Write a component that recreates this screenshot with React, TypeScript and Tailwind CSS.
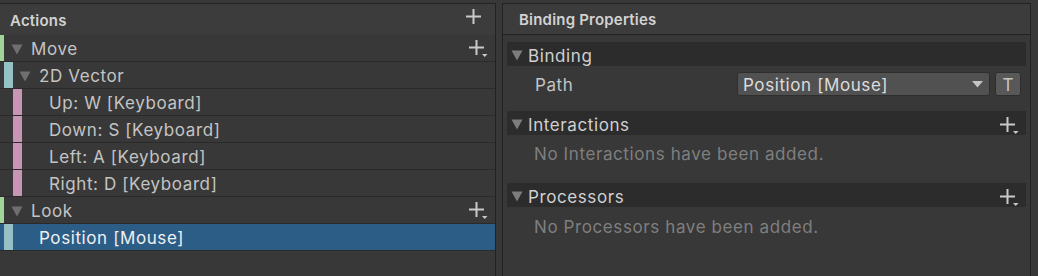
import React from "react";

function Plus({ dropdown }: { dropdown?: boolean }) {
  return (
    <svg width="19" height="18" viewBox="0 0 19 18" className="shrink-0">
      <rect x="6.5" y="0" width="2" height="15" fill="#c9c9c9" />
      <rect x="0" y="6.5" width="15" height="2" fill="#c9c9c9" />
      {dropdown && <path d="M13 14h5.5l-2.75 3z" fill="#c9c9c9" />}
    </svg>
  );
}

function Tri({ color }: { color: string }) {
  return (
    <svg width="12" height="11" viewBox="0 0 12 11" className="shrink-0">
      <path d="M0.5 0.5h11L6 10.5z" fill={color} />
    </svg>
  );
}

type RowProps = {
  bars: { color: string; w: string }[];
  text: string;
  pad: string;
  tri?: boolean;
  triPad?: string;
  plus?: boolean;
  selected?: boolean;
};

function Row({ bars, text, pad, tri, triPad, plus, selected }: RowProps) {
  return (
    <div
      className={
        "flex h-[27px] items-stretch border-b border-[#2a2a2a] " +
        (selected ? "bg-[#2c5d87]" : "")
      }
    >
      {bars.map((b, i) => (
        <div key={i} className={b.w + " shrink-0"} style={{ backgroundColor: b.color }} />
      ))}
      <div className="relative flex min-w-0 flex-1 items-center">
        {tri && (
          <div className={triPad + " flex items-center pt-[2px]"}>
            <Tri color="#6f6f6f" />
          </div>
        )}
        <span
          className={
            pad +
            " pt-[3px] text-[17px] leading-none tracking-[0.6px] " +
            (selected ? "text-[#f0f0f0]" : "text-[#c4c4c4]")
          }
        >
          {text}
        </span>
        <div className="flex-1" />
        {plus && (
          <div className="mr-[7px] mt-[2px]">
            <Plus dropdown />
          </div>
        )}
      </div>
    </div>
  );
}

function SectionHeader({ title, plus }: { title: string; plus?: boolean }) {
  return (
    <div className="flex h-[24px] items-center bg-[#2c2c2c] pl-[4px] pr-[7px]">
      <div className="flex items-center pt-[2px]">
        <Tri color="#7d7d7d" />
      </div>
      <span className="ml-[5px] pt-[4px] text-[17px] leading-none tracking-[0.6px] text-[#d0d0d0]">{title}</span>
      <div className="flex-1" />
      {plus && (
        <div className="mt-[5px]">
          <Plus dropdown />
        </div>
      )}
    </div>
  );
}

export default function App() {
  const green = "#a2d39a";
  const teal = "#95c1c4";
  const pink = "#c995b4";
  return (
    <div className="flex h-[276px] w-[1038px] overflow-hidden bg-[#383838] pt-[3px] [font-family:Inter,'Noto_Sans',sans-serif]">
      {/* Left panel */}
      <div className="flex w-[496px] shrink-0 flex-col border-r border-t border-[#222222] bg-[#383838]">
        <div className="flex h-[31px] items-center bg-[#3c3c3c] pl-[10px] pr-[10px]">
          <span className="pt-[3px] text-[15px] font-semibold tracking-[0.2px] text-[#d2d2d2]">Actions</span>
          <div className="flex-1" />
          <div className="-mt-[4px]">
            <Plus />
          </div>
        </div>
        <div className="flex flex-col">
          <Row bars={[{ color: green, w: "w-[4px]" }]} tri triPad="ml-[7px]" pad="ml-[8px]" text="Move" plus />
          <Row
            bars={[{ color: "transparent", w: "w-[4px]" }, { color: teal, w: "w-[9px]" }]}
            tri
            triPad="ml-[6px]"
            pad="ml-[8px]"
            text="2D Vector"
          />
          <Row
            bars={[{ color: "transparent", w: "w-[13px]" }, { color: pink, w: "w-[9px]" }]}
            pad="ml-[27px]"
            text="Up: W [Keyboard]"
          />
          <Row
            bars={[{ color: "transparent", w: "w-[13px]" }, { color: pink, w: "w-[9px]" }]}
            pad="ml-[27px]"
            text="Down: S [Keyboard]"
          />
          <Row
            bars={[{ color: "transparent", w: "w-[13px]" }, { color: pink, w: "w-[9px]" }]}
            pad="ml-[27px]"
            text="Left: A [Keyboard]"
          />
          <Row
            bars={[{ color: "transparent", w: "w-[13px]" }, { color: pink, w: "w-[9px]" }]}
            pad="ml-[27px]"
            text="Right: D [Keyboard]"
          />
          <Row bars={[{ color: green, w: "w-[4px]" }]} tri triPad="ml-[7px]" pad="ml-[8px]" text="Look" plus />
          <Row
            bars={[{ color: "#2c5d87", w: "w-[4px]" }, { color: teal, w: "w-[9px]" }]}
            pad="ml-[26px]"
            text="Position [Mouse]"
            selected
          />
        </div>
      </div>

      {/* Right panel */}
      <div className="ml-[6px] flex w-[529px] shrink-0 flex-col border-l border-r border-t border-[#222222] bg-[#383838]">
        <div className="flex h-[31px] items-center border-b border-[#222222] bg-[#3c3c3c] pl-[16px]">
          <span className="pt-[3px] text-[15px] font-semibold tracking-[0.2px] text-[#d2d2d2]">Binding Properties</span>
        </div>
        <div className="flex flex-col px-[4px] pt-[7px]">
          <SectionHeader title="Binding" />
          <div className="mt-[6px] flex h-[24px] items-center">
            <span className="ml-[28px] pt-[3px] text-[17px] leading-none tracking-[0.6px] text-[#c4c4c4]">Path</span>
            <div className="flex-1" />
            <div className="flex h-[24px] w-[253px] items-center rounded-[3px] border border-[#2e2e2e] bg-[#515151] pl-[5px] pr-[6px]">
              <span className="pt-[2px] text-[17px] leading-none tracking-[0.6px] text-[#dcdcdc]">Position [Mouse]</span>
              <div className="flex-1" />
              <svg width="11" height="7" viewBox="0 0 11 7">
                <path d="M0 0h11L5.5 6.5z" fill="#c4c4c4" />
              </svg>
            </div>
            <div className="ml-[5px] mr-[5px] flex h-[24px] w-[26px] items-center justify-center rounded-[3px] border border-[#2e2e2e] bg-[#585858]">
              <span className="pt-[2px] text-[17px] leading-none text-[#c4c4c4]">T</span>
            </div>
          </div>
          <div className="mt-[15px]">
            <SectionHeader title="Interactions" plus />
          </div>
          <div className="mt-[6px] flex h-[24px] items-center pl-[27px]">
            <span className="pt-[3px] text-[17px] leading-none tracking-[0.6px] text-[#7f7f7f]">
              No Interactions have been added.
            </span>
          </div>
          <div className="mt-[18px]">
            <SectionHeader title="Processors" plus />
          </div>
          <div className="mt-[7px] flex h-[24px] items-center pl-[27px]">
            <span className="pt-[3px] text-[17px] leading-none tracking-[0.6px] text-[#7f7f7f]">
              No Processors have been added.
            </span>
          </div>
        </div>
      </div>
    </div>
  );
}
